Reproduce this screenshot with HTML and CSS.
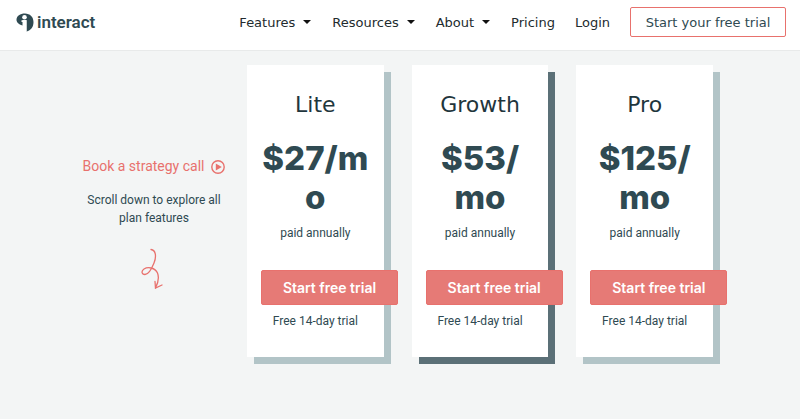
FILE: index.html
```
<!DOCTYPE html>
<html lang="en">
<head>
  <meta charset="UTF-8">
  <meta name="viewport" content="width=device-width, initial-scale=1.0">
  <title>Interact - Pricing</title>
  <link rel="stylesheet" href="styles.css">
</head>
<body>
<header class="header">
  <a class="logo" href="#">
    <svg width="18" height="19" viewBox="0 0 18 19" aria-hidden="true">
      <path fill="#2f4a52" d="M9 0.500C14 0.500 17.500 4 17.500 9C17.500 14 15 17.500 10.500 18.500V7H6.500V12.500C2.500 11.500 0.300 9 0.500 6.500C0.800 3 4 0.500 9 0.500Z"/>
      <path fill="#fff" d="M5.500 7.300H10.500V18.500H8V9H5.500Z"/>
      <circle cx="8.500" cy="4.300" r="2.300" fill="#fff"/>
    </svg>
    <span>interact</span>
  </a>
  <nav class="nav">
    <a class="has-menu" href="#">Features</a>
    <a class="has-menu" href="#">Resources</a>
    <a class="has-menu" href="#">About</a>
    <a href="#">Pricing</a>
    <a href="#">Login</a>
    <button class="trial-outline" type="button">Start your free trial</button>
  </nav>
</header>

<main class="plans">
  <!-- Left column -->
  <section class="intro">
    <a class="call" href="#">
      Book a strategy call
      <svg width="14" height="14" viewBox="0 0 14 14" aria-hidden="true">
        <circle cx="7" cy="7" r="6.200" fill="none" stroke="#e8716d" stroke-width="1.400"/>
        <path fill="#e8716d" d="M4.800 3.600L10.800 7L4.800 10.400Z"/>
      </svg>
    </a>
    <p>Scroll down to explore all plan features</p>
    <svg class="arrow" width="28" height="42" viewBox="0 0 28 42" fill="none" stroke="#e8716d" stroke-width="1.300" stroke-linecap="round" aria-hidden="true">
      <path d="M11 1.500C16 2 16.500 9 14 15C12 20 9 26.500 5 26.500C1.500 26.500 1 23 4 21C8 18.500 15 19.500 17.500 25C19.500 30 18.500 34 15.500 40"/>
      <path d="M15 33.500L15.500 40L22 37"/>
    </svg>
  </section>

  <!-- Plan cards -->
  <article class="card">
    <h2>Lite</h2>
    <p class="price">$27/m<br>o</p>
    <p>paid annually</p>
    <button class="trial" type="button">Start free trial</button>
    <p>Free 14-day trial</p>
  </article>
  <article class="card featured">
    <h2>Growth</h2>
    <p class="price">$53/<br>mo</p>
    <p>paid annually</p>
    <button class="trial" type="button">Start free trial</button>
    <p>Free 14-day trial</p>
  </article>
  <article class="card">
    <h2>Pro</h2>
    <p class="price">$125/<br>mo</p>
    <p>paid annually</p>
    <button class="trial" type="button">Start free trial</button>
    <p>Free 14-day trial</p>
  </article>
</main>
</body>
</html>
```
FILE: styles.css
```
* {
  box-sizing: border-box;
}
body {
  margin: 0;
  background-color: #f3f5f5;
  color: #2f4a52;
  font-family: Roboto, "Liberation Sans", sans-serif;
  font-size: 12px;
}
a {
  color: inherit;
  text-decoration: none;
}
p {
  margin: 0;
  line-height: 18px;
}
/* Top bar */
.header {
  display: flex;
  justify-content: space-between;
  align-items: center;
  height: 51px;
  padding: 0 14px 6px 16px;
  background-color: #fff;
  border-bottom: 1px solid #e8eaea;
}
.logo {
  display: flex;
  align-items: center;
  gap: 3px;
  font-size: 17px;
  font-weight: 600;
}
.nav {
  display: flex;
  align-items: center;
  gap: 20px;
  color: #222b2e;
  font-family: "DejaVu Sans", sans-serif;
  font-size: 13px;
}
.has-menu {
  margin-right: 1px;
}
.has-menu::after {
  content: "";
  display: inline-block;
  margin-left: 8px;
  border: 4px solid transparent;
  border-top-color: #111;
  border-bottom: 0;
  vertical-align: 3px;
}
.trial-outline {
  width: 156px;
  height: 30px;
  padding: 0;
  background-color: #fff;
  border: 1px solid #e8716d;
  border-radius: 2px;
  color: #2f4a52;
  font: 13px "DejaVu Sans", sans-serif;
}
/* Plans */
.plans {
  display: flex;
  align-items: flex-start;
  gap: 28px;
  padding: 14px 87px 62px 82px;
}
.intro {
  flex: none;
  width: 144px;
  margin-right: -7px;
  padding-top: 92px;
  text-align: center;
}
.call {
  display: flex;
  justify-content: center;
  align-items: center;
  gap: 7px;
  margin-bottom: 15px;
  color: #e8716d;
  font-size: 14px;
  line-height: 19px;
  white-space: nowrap;
}
.arrow {
  margin-top: 21px;
}
.card {
  flex: 1;
  min-width: 0;
  height: 292px;
  padding: 26px 14px;
  background-color: #fff;
  box-shadow: 7px 7px 0 #b2c4c7;
  text-align: center;
}
.card.featured {
  box-shadow: 7px 7px 0 #5b7077;
}
.card h2 {
  margin: 0 0 20px;
  color: #1f363d;
  font: 400 22px/28px "DejaVu Sans", sans-serif;
}
.price {
  margin-bottom: 7px;
  font: 800 33px/39px Inter, sans-serif;
  white-space: nowrap;
}
.trial {
  width: 137px;
  height: 35px;
  margin: 28px 0 7px;
  padding: 0;
  background-color: #e67a76;
  border: 1px solid #e8716d;
  border-radius: 2px;
  color: #fff;
  font: 600 14px Inter, sans-serif;
}
```
